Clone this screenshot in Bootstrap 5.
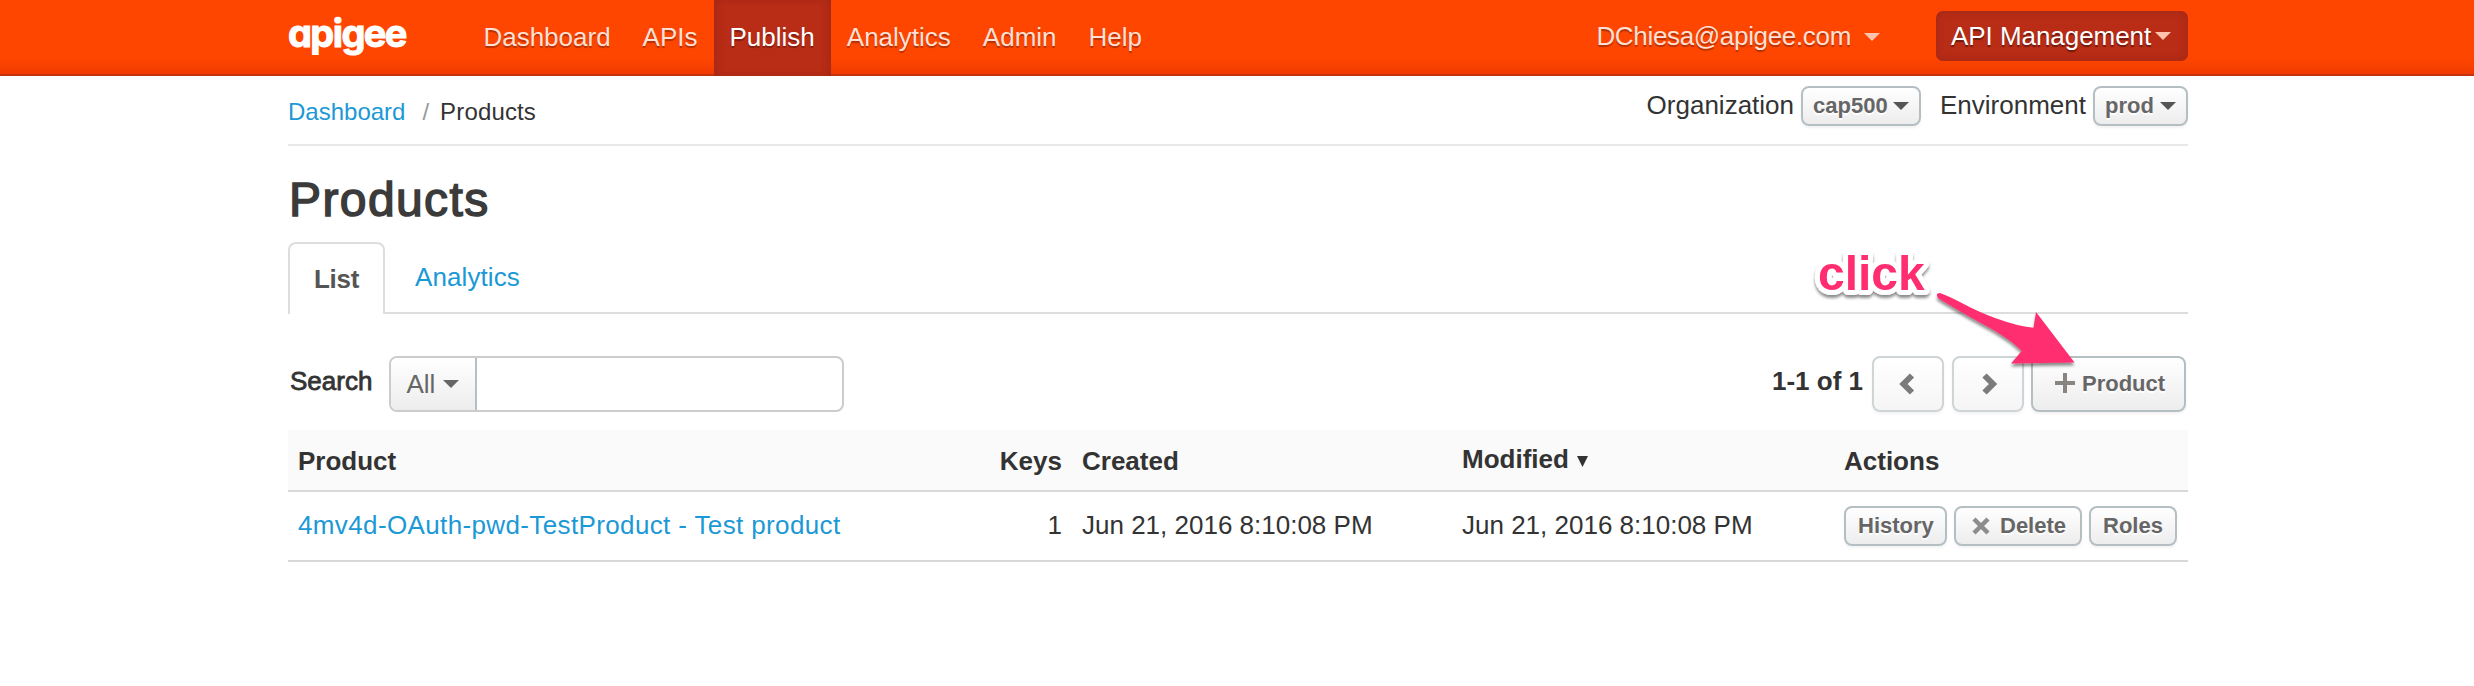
<!DOCTYPE html>
<html lang="en">
<head>
<meta charset="utf-8">
<title>Products</title>
<link href="https://cdn.jsdelivr.net/npm/bootstrap@5.3.0/dist/css/bootstrap.min.css" rel="stylesheet">
<style>
body{font-family:"Liberation Sans",Arial,sans-serif;font-size:26px;line-height:40px;color:#333;background:#fff;overflow:hidden;height:686px}
a{color:#1b99d6;text-decoration:none}
.wrap{width:1900px;margin-left:288px}
.topbar{height:76px;padding:0;background:linear-gradient(#ff4600 0,#ff4600 58px,#f03a00 74px,#c33311 74px)}
.brand{font:700 38px/40px Inter,"Liberation Sans",sans-serif;font-feature-settings:"cv11";color:#fff;width:179.4px;letter-spacing:-1.6px;-webkit-text-stroke:1px #fff;padding-top:13px}
.topbar .nav-link{height:76px;padding:17px 16px 0;color:#ffe0d6;line-height:40px;text-shadow:0 2px 1px rgba(0,0,0,.3)}
.topbar .nav-link.active{background:#b92c16;color:#fff;box-shadow:inset 6px 0 8px -4px rgba(90,30,30,.25),inset -6px 0 8px -4px rgba(90,30,30,.25)}
.tri{display:inline-block;border:8px solid transparent;border-top-color:currentColor;border-bottom:0;flex:none}
.user{color:#ffe0d6;text-shadow:0 2px 1px rgba(0,0,0,.3);padding-top:16px;margin-right:56px;letter-spacing:-.33px}
.user .tri,.mgmt .tri{color:#ffc2ae}
.mgmt{width:252px;height:50px;margin-top:11px;border-radius:7px;background:#b92c16;color:#fff;padding:5px 0 0 15px;text-shadow:0 2px 1px rgba(0,0,0,.4);box-shadow:inset 0 0 8px rgba(90,30,30,.3);white-space:nowrap;letter-spacing:-.05px}
.crumbs{height:70px;border-bottom:2px solid #e8e8e8;font-size:24px}
.crumbs .trail{padding-top:16px}
.scope{font-size:26px;padding-top:9px}
.gbtn{height:40px;border:2px solid #b5bfc3;border-radius:8px;background:linear-gradient(#fff,#ededed);color:#666;font-size:22px;font-weight:700;line-height:38px;padding:0;text-shadow:0 2px 1px #fff;box-shadow:0 2px 3px rgba(0,0,0,.05);display:flex;align-items:center;white-space:nowrap}
.gbtn .tri{color:#555}
.title{font-size:48px;font-weight:400;line-height:60px;color:#3b3b3b;-webkit-text-stroke:1.5px #3b3b3b;letter-spacing:1.4px;margin:24px 0 0;padding-left:1px;height:72px}
.tabs{border-bottom:2px solid #ddd;height:72px}
.tabs .on{width:97px;height:72px;border:2px solid #ddd;border-bottom:0;border-radius:8px 8px 0 0;background:#fff;font-weight:700;color:#555;padding:15px 0 0 24px;letter-spacing:-.3px}
.tabs .off{padding:15px 0 0 30px;letter-spacing:.1px}
.tools{height:116px;padding-top:42px}
.medium{-webkit-text-stroke:.8px #333}
.search{width:455px;height:56px;border:2px solid #ccc;border-radius:8px;overflow:hidden;background:#fff}
.search .pick{width:86px;border-right:2px solid #b5bfc3;background:linear-gradient(#fff,#ededed);color:#666;padding:0 0 0 15px}
.pager .gbtn{height:56px;line-height:52px}
.pager .dim{width:72px;border-color:#cfd4d6;background:linear-gradient(#fff,#f5f5f5)}
.grid{width:1900px;table-layout:fixed;margin:0;color:#333;--bs-table-bg:transparent;--bs-table-color:#333;border-collapse:separate;border-spacing:0}
.grid th,.grid td{padding:0 10px;border-bottom:2px solid #d8d8d8!important;vertical-align:top;white-space:nowrap}
.grid th{height:62px;background:#fafafa;padding-top:11px;font-weight:700}
.grid td{height:70px;padding-top:13px}
.longlink{letter-spacing:.37px}
.note{position:absolute;left:1780px;top:230px}
</style>
</head>
<body>
<header class="topbar">
 <div class="wrap d-flex">
  <div class="brand">apigee</div>
  <nav class="nav flex-nowrap">
   <a class="nav-link" href="#">Dashboard</a><a class="nav-link" href="#">APIs</a><a class="nav-link active" href="#">Publish</a><a class="nav-link" href="#">Analytics</a><a class="nav-link" href="#">Admin</a><a class="nav-link" href="#">Help</a>
  </nav>
  <div class="user ms-auto d-flex align-items-start">DChiesa@apigee.com<span class="tri" style="margin:17px 0 0 13px"></span></div>
  <div class="mgmt d-flex">API Management<span class="tri" style="margin:16px 0 0 4px"></span></div>
 </div>
</header>
<main class="wrap">
 <div class="crumbs d-flex justify-content-between">
  <div class="trail"><a href="#">Dashboard</a><span style="color:#999;margin:0 11px 0 17px">/</span><span style="letter-spacing:.15px">Products</span></div>
  <div class="scope d-flex">Organization<button class="gbtn" style="width:120px;margin:1px 19px 0 7px;padding-left:10px">cap500<span class="tri" style="margin-left:5px"></span></button>Environment<button class="gbtn" style="width:95px;margin:1px 0 0 7px;padding-left:10px">prod<span class="tri" style="margin-left:6px"></span></button></div>
 </div>
 <h1 class="title">Products</h1>
 <div class="tabs d-flex"><div class="on">List</div><a class="off" href="#">Analytics</a></div>
 <div class="tools d-flex">
  <span class="medium" style="margin:5px 17px 0 2px">Search</span>
  <div class="search d-flex"><div class="pick d-flex align-items-center">All<span class="tri" style="margin-left:8px"></span></div></div>
  <div class="pager d-flex ms-auto" style="margin-right:2px">
   <b style="margin:5px 9px 0 0">1-1 of 1</b>
   <button class="gbtn dim justify-content-center" style="margin-right:8px;padding-right:3px"><svg width="16" height="24" viewBox="0 0 16 24"><path d="M13 3.500L4.500 12l8.500 8.500" fill="none" stroke="#7b7b7b" stroke-width="6"/></svg></button>
   <button class="gbtn dim justify-content-center" style="margin-right:7px;padding-left:3px"><svg width="16" height="24" viewBox="0 0 16 24"><path d="M2.500 3.500L11 12l-8.500 8.500" fill="none" stroke="#7b7b7b" stroke-width="6"/></svg></button>
   <button class="gbtn" style="width:155px;padding-left:22px"><svg width="20" height="20" viewBox="0 0 20 20" style="margin:-3px 7px 0 0"><path d="M10 0v20M0 10h20" stroke="#888480" stroke-width="4"/></svg>Product</button>
  </div>
 </div>
 <table class="table grid">
  <colgroup><col style="width:684px"><col style="width:100px"><col style="width:380px"><col style="width:382px"><col></colgroup>
  <thead><tr><th>Product</th><th class="text-end">Keys</th><th>Created</th><th style="padding-top:9px">Modified<svg width="12" height="12" style="margin-left:8px;display:inline-block;vertical-align:baseline" viewBox="0 0 12 12"><path d="M0 0h11L5.500 11z" fill="#333"/></svg></th><th>Actions</th></tr></thead>
  <tbody><tr><td><a class="longlink" href="#">4mv4d-OAuth-pwd-TestProduct - Test product</a></td><td class="text-end">1</td><td>Jun 21, 2016 8:10:08 PM</td><td>Jun 21, 2016 8:10:08 PM</td>
  <td><div class="d-flex" style="margin-top:1px;gap:7px"><button class="gbtn" style="width:103px;padding-left:12px">History</button><button class="gbtn" style="width:128px;padding-left:15px"><svg width="20" height="18" viewBox="0 0 20 18" style="margin-right:9px"><path d="M3 2l14 14M17 2L3 16" stroke="#8d8d8d" stroke-width="4.500"/></svg>Delete</button><button class="gbtn" style="width:88px;padding-left:12px">Roles</button></div></td></tr></tbody>
 </table>
</main>
<svg class="note" width="310" height="150" viewBox="1780 230 310 150">
 <defs><filter id="sh" x="-20%" y="-20%" width="140%" height="150%"><feDropShadow dx="0" dy="3" stdDeviation="1.500" flood-color="#000" flood-opacity=".45"/></filter></defs>
 <text x="1818" y="290" font-size="48" font-weight="700" fill="#ff2d70" stroke="#fff" stroke-width="10" stroke-linejoin="round" paint-order="stroke" filter="url(#sh)">click</text>
 <path d="M1940 293C1955 298 1970 309 1995 318Q2020 327 2033.500 327.700L2036 312L2074.500 362.500L2011 363.500L2021.700 351C2005 333 1972 320 1938 298Q1935 293 1940 293Z" fill="#ff2d70" filter="url(#sh)"/>
</svg>
<script src="https://cdn.jsdelivr.net/npm/bootstrap@5.3.0/dist/js/bootstrap.bundle.min.js"></script>
</body>
</html>
